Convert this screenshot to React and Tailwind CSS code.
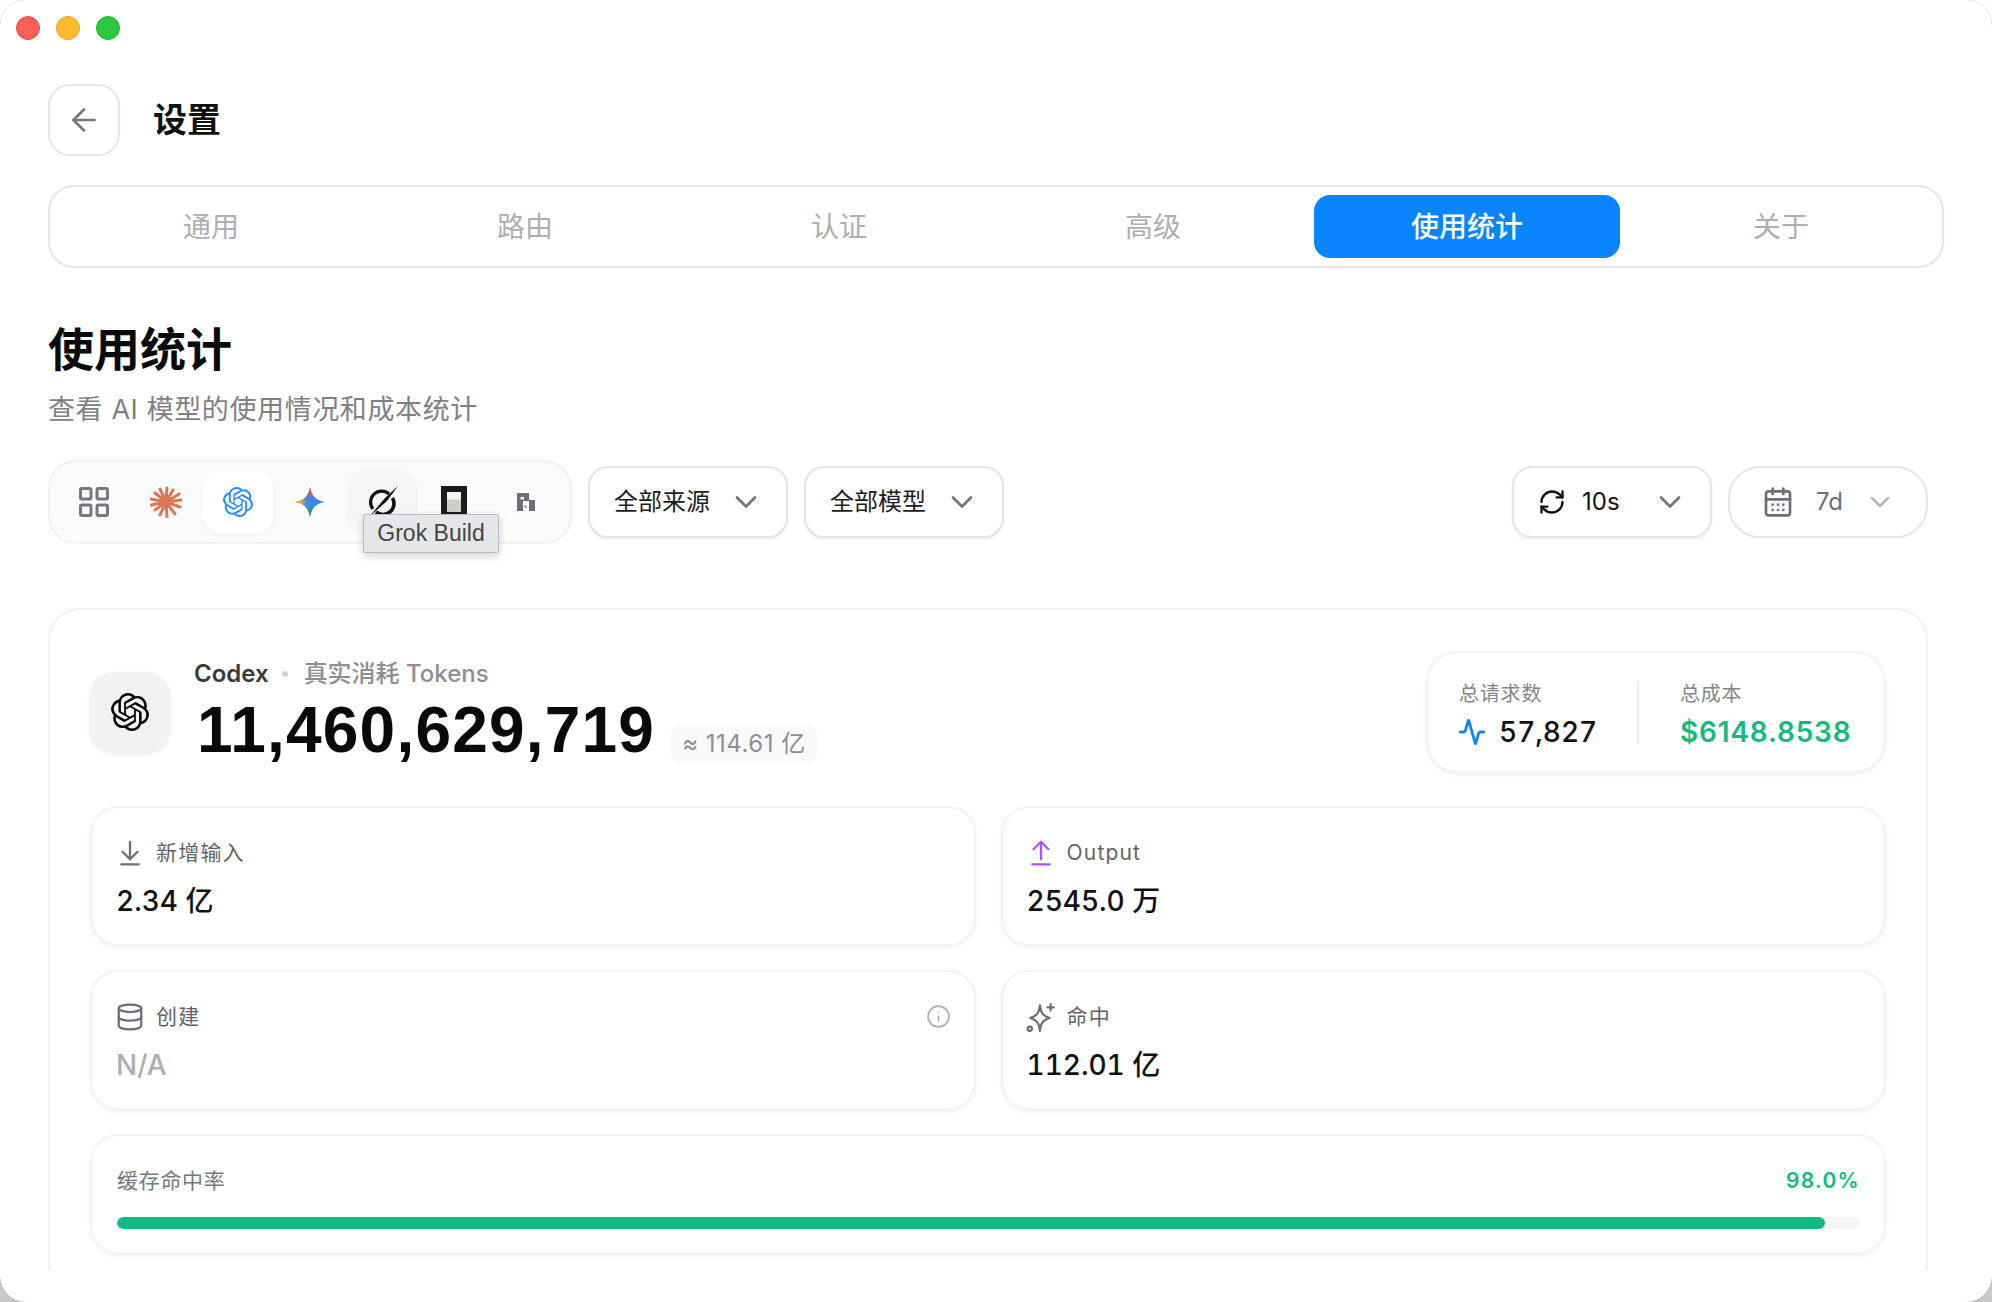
import { ArrowLeft, ChevronDown, RefreshCw, CalendarDays, Activity, ArrowDownToLine, ArrowUpFromLine, Database, Info, LayoutGrid } from "lucide-react";
import { SiOpenai } from "react-icons/si";

const SANS = "font-['Inter','Noto_Sans_CJK_SC',sans-serif]";

const tabs = ["通用", "路由", "认证", "高级", "使用统计", "关于"];

const ClaudeIcon = () => (
    <svg width="32" height="32" viewBox="0 0 32 32" stroke="#d97757" strokeWidth="3" strokeLinecap="round">
        <path d="M16 16 L10 3 M16 16 L17 2 M16 16 L23 4 M16 16 L29 8 M16 16 L31 14 M16 16 L30 21 M16 16 L25 28 M16 16 L17 31 M16 16 L10 29 M16 16 L5 24 M16 16 L1 19 M16 16 L1 13 M16 16 L5 7" />
    </svg>
);

const GeminiIcon = () => (
    <svg width="30" height="30" viewBox="0 0 30 30">
        <defs>
            <clipPath id="star"><path d="M15 0 C16.5 9 21 13.5 30 15 C21 16.5 16.5 21 15 30 C13.5 21 9 16.5 0 15 C9 13.5 13.5 9 15 0Z" /></clipPath>
            <filter id="soft"><feGaussianBlur stdDeviation="2" /></filter>
        </defs>
        <g clipPath="url(#star)">
            <rect width="30" height="30" fill="#3b86f7" />
            <g filter="url(#soft)">
                <rect x="8" y="-2" width="12" height="11" fill="#e0506a" />
                <rect x="-2" y="10" width="11" height="9" fill="#f2b21c" />
                <rect x="8" y="21" width="12" height="11" fill="#17a673" />
            </g>
        </g>
    </svg>
);

const GrokIcon = () => (
    <svg width="34" height="34" viewBox="0 0 34 34" fill="none">
        <path d="M24 9 A11 11 0 0 0 8 24" stroke="#111" strokeWidth="3.2" />
        <path d="M27.5 13 A11 11 0 0 1 11 27" stroke="#111" strokeWidth="3.6" />
        <path d="M33 1 L20 13 L4 32 L22 16Z" fill="#111" />
    </svg>
);

const OpenCodeIcon = () => (
    <svg width="26" height="32" viewBox="0 0 26 32">
        <defs>
            <linearGradient id="oc" x1="0" y1="0" x2="0" y2="1">
                <stop offset="0.35" stopColor="#f4f4f3" />
                <stop offset="0.4" stopColor="#d0cecb" />
            </linearGradient>
        </defs>
        <rect width="26" height="32" fill="#1d1b1b" />
        <rect x="6" y="6" width="14" height="20" fill="url(#oc)" />
    </svg>
);

const PixelIcon = () => (
    <svg width="20" height="20" viewBox="0 0 20 20" fill="#6e6e78">
        <path d="M1 1 H13 V9 H7 V19 H1Z M4.5 5 V7.5 H8 V5Z" fillRule="evenodd" />
        <rect x="13" y="8" width="6" height="11" />
        <rect x="8" y="13" width="3" height="3" opacity="0.5" />
    </svg>
);

const StarIcon = () => (
    <svg width="30" height="30" viewBox="0 0 28 28" fill="none" stroke="#6e6e78" strokeWidth="2" strokeLinecap="round" strokeLinejoin="round" className="shrink-0">
        <path d="M13 3 C13.8 10 15.5 13 22 15 C15.5 17 13.8 20 13 27 C12.2 20 10.5 17 4 15 C10.5 13 12.2 10 13 3Z" />
        <path d="M23 2 V8 M20 5 H26" />
        <circle cx="3.5" cy="25" r="2" />
    </svg>
);

const Select = ({ label }) => (
    <div className="w-[200px] h-[72px] rounded-[20px] border-2 border-[#e5e5e5] bg-white shadow-[0_2px_4px_rgba(0,0,0,0.06)] flex items-center justify-between pl-[24px] pr-[22px] text-[24px] text-[#1c1c1e]">
        <span>{label}</span>
        <ChevronDown size={36} strokeWidth={1.9} className="text-[#77777c]" />
    </div>
);

const StatCard = ({ icon, label, value, muted, extra }) => (
    <div className="h-[140px] rounded-[28px] border-2 border-[#f3f3f3] bg-white shadow-[0_2px_5px_rgba(0,0,0,0.05)] px-[25px] pt-[29px]">
        <div className="flex items-center h-[32px]">
            <div className="w-[26px] flex justify-center">{icon}</div>
            <span className="ml-[13px] text-[21px] text-[#636366] tracking-[1.2px]">{label}</span>
            {extra && <div className="ml-auto -mr-[2px] -mt-[2px]">{extra}</div>}
        </div>
        <div className={`mt-[14px] -ml-[1px] text-[28px] leading-[36px] font-medium tabular-nums ${muted ? "text-[#aeaeb2]" : "text-[#111]"}`}>{value}</div>
    </div>
);

const App = () => {
    return (
        <div className="w-[1992px] h-[1302px] bg-gradient-to-b from-white via-white to-[#c8c8c8]">
            <div className={`${SANS} h-full bg-white rounded-[26px] shadow-[0_0_1px_rgba(0,0,0,0.4)] overflow-hidden text-[#111]`}>
                <div className="h-[56px] flex items-center gap-[16px] pl-[16px]">
                    <span className="w-[24px] h-[24px] rounded-full bg-[#ff5f57] border border-[#e8524a]"></span>
                    <span className="w-[24px] h-[24px] rounded-full bg-[#febc2e] border border-[#e3a520]"></span>
                    <span className="w-[24px] h-[24px] rounded-full bg-[#28c840] border border-[#22b537]"></span>
                </div>

                <div className="h-[1214px] overflow-hidden px-[48px]">
                    <div className="mt-[28px] flex items-center gap-[33px]">
                        <div className="w-[72px] h-[72px] rounded-[22px] border-2 border-[#e5e5ea] flex items-center justify-center">
                            <ArrowLeft size={36} strokeWidth={1.8} className="text-[#77777f]" />
                        </div>
                        <h1 className="text-[34px] font-bold -mt-[2px]">设置</h1>
                    </div>

                    <div className="mt-[29px] h-[83px] rounded-[26px] border-2 border-[#e5e5ea] p-[8px] flex gap-[8px]">
                        {tabs.map((tab) => (
                            <div key={tab} className={`w-[306px] pt-[1px] flex items-center justify-center text-[28px] rounded-[16px] ${tab === "使用统计" ? "bg-[#0a84ff] text-white font-medium" : "text-[#aeaeb2]"}`}>
                                {tab}
                            </div>
                        ))}
                    </div>

                    <h2 className="mt-[51px] text-[46px] leading-[60px] font-bold text-[#0a0a0a]">使用统计</h2>
                    <p className="mt-[13px] text-[27px] leading-[36px] tracking-[0.6px] text-[#7f7f85]">查看 AI 模型的使用情况和成本统计</p>

                    <div className="mt-[32px] flex items-center pr-[16px]">
                        <div className="flex rounded-[28px] border-2 border-[#f1f1f1] bg-[#fbfbfb] p-[8px]">
                            <div className="w-[72px] h-[64px] flex items-center justify-center"><LayoutGrid size={36} strokeWidth={2} className="text-[#77777f]" /></div>
                            <div className="w-[72px] h-[64px] flex items-center justify-center"><ClaudeIcon /></div>
                            <div className="w-[72px] h-[64px] rounded-[20px] bg-white shadow-[0_1px_4px_rgba(0,0,0,0.06)] flex items-center justify-center"><SiOpenai size={30} className="text-[#2b8cff]" /></div>
                            <div className="w-[72px] h-[64px] flex items-center justify-center"><GeminiIcon /></div>
                            <div className="w-[72px] h-[64px] rounded-[20px] bg-[#f6f6f6] flex items-center justify-center"><GrokIcon /></div>
                            <div className="w-[72px] h-[64px] flex items-center justify-center"><OpenCodeIcon /></div>
                            <div className="w-[72px] h-[64px] flex items-center justify-center"><PixelIcon /></div>
                        </div>
                        <div className="ml-[16px] flex gap-[16px]">
                            <Select label="全部来源" />
                            <Select label="全部模型" />
                        </div>
                        <div className="ml-auto flex gap-[16px]">
                            <div className="w-[200px] h-[72px] rounded-[20px] border-2 border-[#e5e5e5] shadow-[0_2px_4px_rgba(0,0,0,0.06)] flex items-center pl-[24px] text-[24px]">
                                <RefreshCw size={28} strokeWidth={2} className="text-[#111]" />
                                <span className="ml-[16px]">10s</span>
                                <ChevronDown size={36} strokeWidth={1.9} className="ml-[32px] text-[#77777c]" />
                            </div>
                            <div className="w-[200px] h-[72px] rounded-[32px] border-2 border-[#e5e5e5] flex items-center pl-[32px] text-[24px] text-[#6e6e73]">
                                <CalendarDays size={32} strokeWidth={2} className="text-[#6e6e78]" />
                                <span className="ml-[22px]">7d</span>
                                <ChevronDown size={32} strokeWidth={1.9} className="ml-[21px] text-[#b5b5ba]" />
                            </div>
                        </div>
                    </div>

                    <div className="relative">
                        <div className="absolute left-[315px] -top-[30px] z-10 w-[136px] h-[39px] bg-[#e5e6e9] border border-[#bcbcbc] rounded-[2px] shadow-[0_3px_8px_rgba(0,0,0,0.18)] flex items-center justify-center text-[23px] text-[#444] font-['Liberation_Sans',sans-serif]">
                            Grok Build
                        </div>
                    </div>

                    <div className="mt-[64px] mr-[16px] rounded-[32px] border-2 border-[#f2f2f2] px-[40px] pt-[41px] h-[800px]">
                        <div className="flex justify-between h-[123px]">
                            <div className="flex items-start">
                                <div className="mt-[21px] w-[80px] h-[80px] rounded-[24px] bg-[#f2f2f2] shadow-[0_2px_5px_rgba(0,0,0,0.08)] flex items-center justify-center">
                                    <SiOpenai size={38} className="text-black" />
                                </div>
                                <div className="ml-[24px]">
                                    <div className="flex items-center text-[24px] leading-[32px] mt-[7px]">
                                        <span className="font-semibold text-[#3a3a3c]">Codex</span>
                                        <span className="ml-[13px] mr-[16px] w-[6px] h-[6px] rounded-full bg-[#d1d1d6]"></span>
                                        <span className="font-medium text-[#8e8e93]">真实消耗 Tokens</span>
                                    </div>
                                    <div className="flex items-center mt-[5px]">
                                        <span className="ml-[3px] text-[64px] leading-[70px] font-bold tracking-[1.2px] font-['Liberation_Sans',sans-serif] text-[#0a0a0a]">11,460,629,719</span>
                                        <span className="ml-[16px] mt-[28px] h-[40px] px-[11px] rounded-[12px] bg-[#fafafa] flex items-center text-[24px] tracking-[0.5px] text-[#8e8e93]">≈ 114.61 亿</span>
                                    </div>
                                </div>
                            </div>
                            <div className="w-[460px] h-[122px] rounded-[32px] border-2 border-[#f3f3f3] shadow-[0_2px_5px_rgba(0,0,0,0.05)] flex items-center pl-[31px]">
                                <div className="w-[178px] mt-[5px]">
                                    <div className="text-[20px] leading-[28px] tracking-[0.8px] text-[#86868b]">总请求数</div>
                                    <div className="mt-[6px] flex items-center">
                                        <Activity size={28} strokeWidth={2.4} className="text-[#0a84ff] -ml-[1px]" />
                                        <span className="ml-[13px] text-[28px] leading-[36px] font-medium tabular-nums">57,827</span>
                                    </div>
                                </div>
                                <div className="w-[2px] h-[63px] bg-[#ededed]"></div>
                                <div className="ml-[41px] mt-[5px]">
                                    <div className="text-[20px] leading-[28px] tracking-[0.8px] text-[#86868b]">总成本</div>
                                    <div className="mt-[6px] text-[28px] leading-[36px] font-semibold tracking-[0.8px] text-[#14b981]">$6148.8538</div>
                                </div>
                            </div>
                        </div>

                        <div className="mt-[32px] grid grid-cols-2 gap-x-[25px] gap-y-[24px]">
                            <StatCard icon={<ArrowDownToLine size={30} strokeWidth={1.8} className="text-[#6e6e78] shrink-0" />} label="新增输入" value="2.34 亿" />
                            <StatCard icon={<ArrowUpFromLine size={30} strokeWidth={1.8} className="text-[#a855f7] shrink-0" />} label="Output" value="2545.0 万" />
                            <StatCard
                                icon={<Database size={30} strokeWidth={1.8} className="text-[#6e6e78] shrink-0" />}
                                label="创建"
                                value="N/A"
                                muted
                                extra={<Info size={25} strokeWidth={1.6} className="text-[#aeaeb2]" />}
                            />
                            <StatCard icon={<StarIcon />} label="命中" value="112.01 亿" />
                        </div>

                        <div className="mt-[24px] h-[120px] rounded-[28px] border-2 border-[#f3f3f3] shadow-[0_2px_5px_rgba(0,0,0,0.05)] pl-[25px] pr-[24px] pt-[30px]">
                            <div className="flex justify-between text-[21px] leading-[30px]">
                                <span className="text-[#77777c] tracking-[0.7px]">缓存命中率</span>
                                <span className="font-semibold tracking-[1.3px] text-[#14b981]">98.0%</span>
                            </div>
                            <div className="mt-[21px] h-[12px] rounded-full bg-[#f5f5f5] overflow-hidden">
                                <div className="h-full rounded-full bg-[#14b981]" style={{ width: "98%" }}></div>
                            </div>
                        </div>
                    </div>
                </div>
            </div>
        </div>
    );
};

export default App;
